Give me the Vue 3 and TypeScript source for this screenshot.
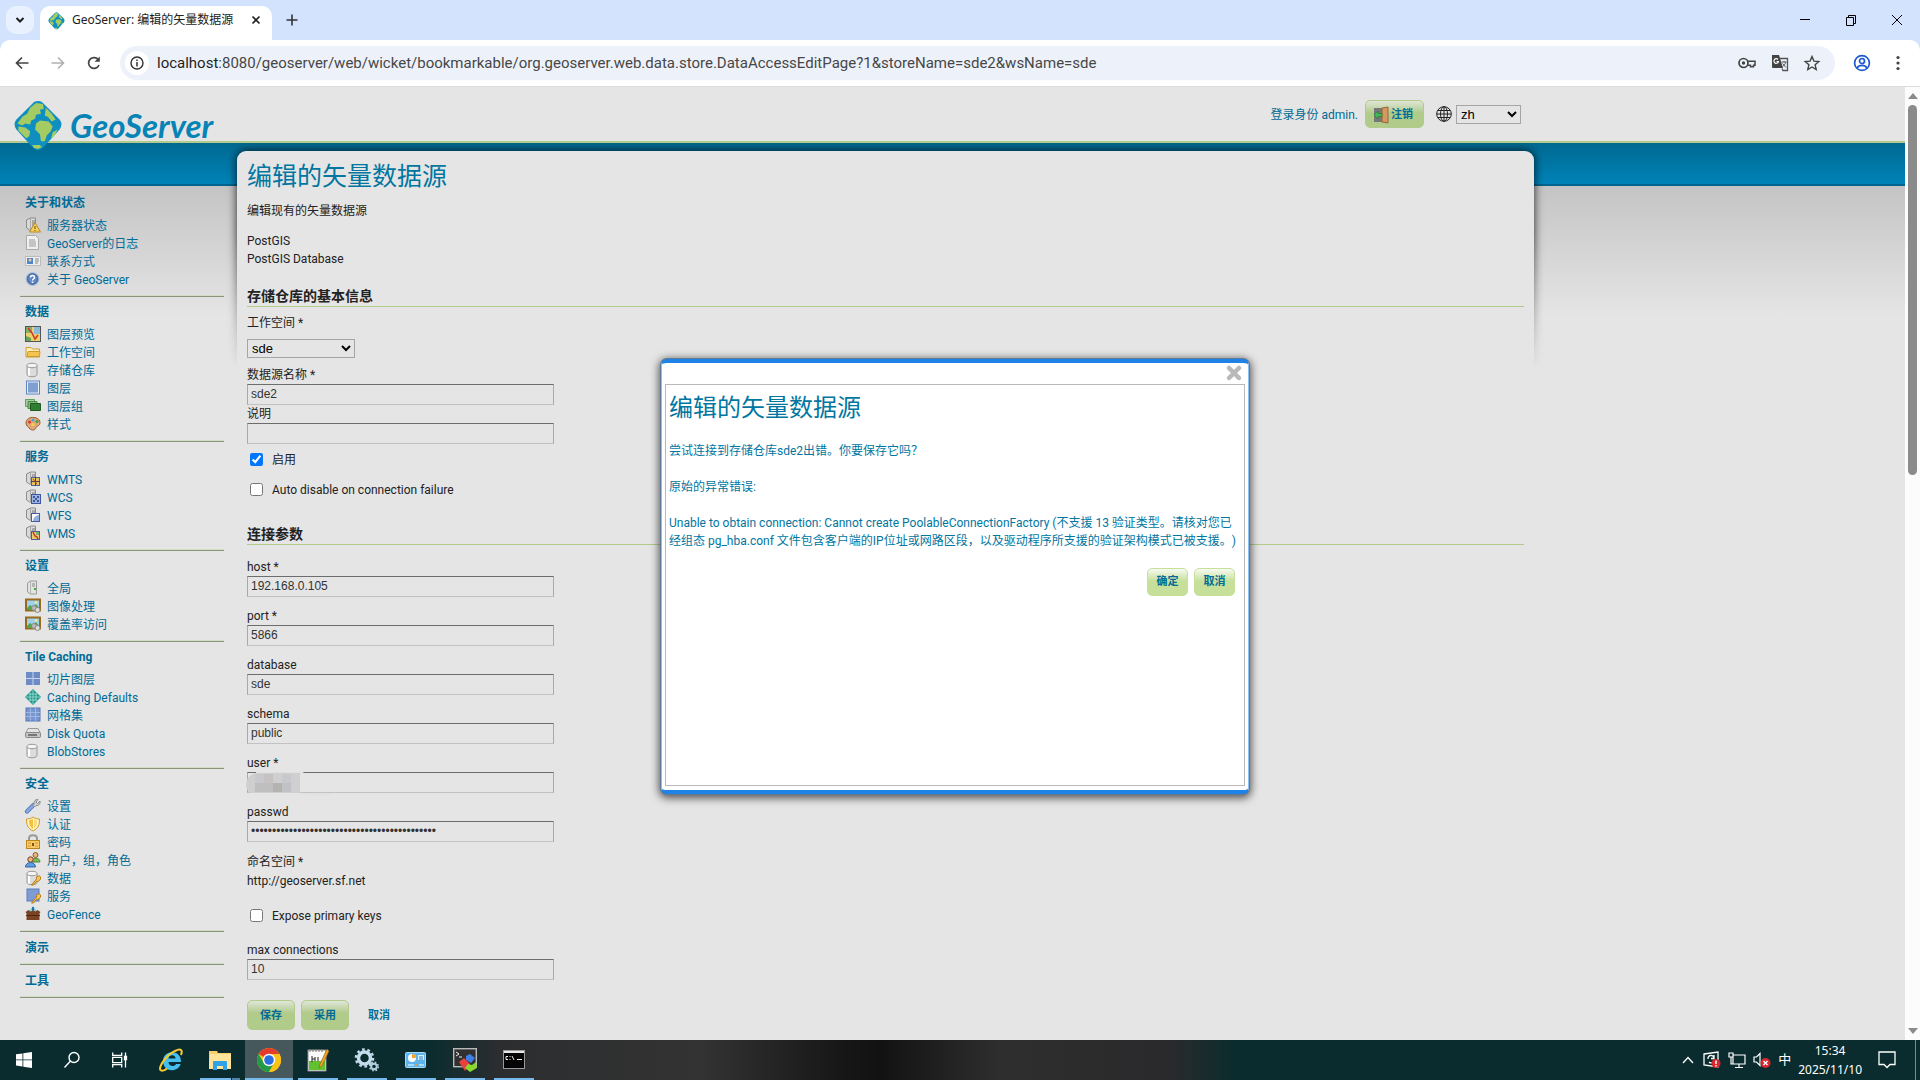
<script setup lang="ts">
import { ref } from 'vue'

interface Item { icon: string; label: string }
interface Section { title: string; items: Item[] }

const server = '<path d="M1.500 3l4-2h5v12h-6l-3-2z" fill="#d9d9d9" stroke="#8c8c8c"/><path d="M5.500 1v12" stroke="#aaa"/><path d="M7 4h3M7 6h3M7 8h3" stroke="#777"/>'
const cylinder = '<path d="M2 3.500v9c0 3 10 3 10 0v-9" fill="#dcdcdc" stroke="#999"/><path d="M4 5.500v8" stroke="#fff" stroke-width="2"/><ellipse cx="7" cy="3.500" rx="5" ry="2.200" fill="#f4f4f4" stroke="#999"/>'
const key = '<path d="M6.500 15l5-6c-.5-2 1-3.500 3-3 1.500.5 1.500 3 0 4.500-1 1-2 1-2.700.700L8.500 15z" fill="#f6c65b" stroke="#b57a14"/>'
const picture = '<rect x="1" y="1.500" width="14" height="11" fill="#9fd0ee" stroke="#9a6a1c" stroke-width="2"/><path d="M2 10l3-3 3 2 3-3 3 4v2H2z" fill="#4fa34c"/><circle cx="11" cy="4.500" r="1.300" fill="#f5ee80"/><circle cx="9" cy="10" r="2.500" fill="#bbb" stroke="#888"/><circle cx="12.500" cy="12" r="2.500" fill="#ddd" stroke="#888"/>'

const icons: Record<string, string> = {
  status: server + '<path d="M10 5.500L15.500 15h-11z" fill="#f8cf5f" stroke="#b98a22"/><path d="M10 9v3M10 13v1" stroke="#6b4a00"/>',
  log: '<path d="M1.500.500h9l3 3v11h-12z" fill="#f0f0f0" stroke="#aaa"/><path d="M4 5h6M4 7h7M4 9h7M4 11h7" stroke="#999"/>',
  contact: '<rect x=".5" y="3.500" width="15" height="9" fill="#eee" stroke="#bbb"/><rect x="2" y="5" width="6" height="6" fill="#4d86c9"/><circle cx="5" cy="7" r="1.500" fill="#f1c7a0"/><path d="M10 6h4M10 8h4M10 10h3" stroke="#888"/>',
  about: '<circle cx="7.500" cy="8" r="6.500" fill="#6288c4" stroke="#b6c3da"/><circle cx="7.500" cy="8" r="5" fill="none" stroke="#44689f"/><path d="M5.500 6.500c0-3 4-2.500 4 0 0 1.500-2 1.500-2 3M7.500 10.500v1.500" fill="none" stroke="#fff" stroke-width="1.500"/>',
  preview: '<rect x=".5" y=".5" width="15" height="15" fill="#e9d36a" stroke="#555"/><path d="M1 1h6v6H1z" fill="#7fb36c"/><path d="M9 1h6v7H9z" fill="#8db8de"/><path d="M1 10l5 2v3H1z" fill="#69a05a"/><path d="M3 2l4 5 3 6 3-4" fill="none" stroke="#d8342a" stroke-width="1.500"/>',
  folder: '<path d="M1 3.500h5l1.500 1.500h7v8H1z" fill="#fff0b8" stroke="#d19a2e"/><path d="M2 12.500l1-5h12l-.5 5z" fill="#f4c553" stroke="#d19a2e"/>',
  store: cylinder,
  layer: '<rect x="1.500" y="1" width="13" height="13" fill="#e8effa" stroke="#5f83c3"/><rect x="3" y="2.500" width="10" height="10" fill="#7e9fcf"/>',
  group: '<path d="M.5 1.500h9v7h-9z" fill="#a8cfa4" stroke="#5f9f5c"/><path d="M3 3.500h9v7H3z" fill="#7db878" stroke="#4a8c47"/><path d="M5.500 5.500h10v7h-10z" fill="#2f7d33" stroke="#1f5d24"/>',
  style: '<path d="M1 7C1 3 5 1 9 1.500c5 .5 7 4 5.500 7-1 2-3 1-3.500 3-.5 3-4 3-6 1.500C3.500 11 1 10 1 7z" fill="#e0a777" stroke="#9a5a2c"/><circle cx="4.500" cy="6" r="1.500" fill="#d33"/><circle cx="8" cy="4" r="1.500" fill="#4aa2d8"/><circle cx="12" cy="5.500" r="1.500" fill="#3fa34a"/><circle cx="8" cy="8.500" r="1.500" fill="#f1d04c"/>',
  wmts: server + '<rect x="6.500" y="6.500" width="8" height="8" fill="#e5c35a" stroke="#555c9a"/><path d="M10.500 6v9M6 10.500h9" stroke="#444"/><path d="M8 8l4 5" stroke="#c33"/>',
  wcs: server + '<rect x="6.500" y="5.500" width="9" height="9" fill="#9fb4dd" stroke="#3f56a0"/><path d="M8 7h2v2H8zM12 7h2v2h-2zM10 9h2v2h-2zM8 11h2v2H8zM12 11h2v2h-2z" fill="#3f56a0"/>',
  wfs: server + '<rect x="6.500" y="6.500" width="8" height="8" fill="#fff" stroke="#4a5aa0"/><path d="M14 8c-3 0-6 3-6 6h6z" fill="#8fb0dd"/>',
  wms: server + '<rect x="6.500" y="6.500" width="8" height="8" fill="#e8cf6a" stroke="#555c9a"/><path d="M11 7h3v3h-3z" fill="#7ab26c"/><path d="M8 7l2 4 2 1 1 2" fill="none" stroke="#c33" stroke-width="1.500"/>',
  global: '<path d="M2.500 3l3-2h6v13h-6l-3-2z" fill="#e3e3e3" stroke="#9a9a9a"/><path d="M5.500 1v13" stroke="#b5b5b5"/><path d="M7 4h3M7 6h3" stroke="#888"/><path d="M9 9h2" stroke="#36b02f" stroke-width="2"/>',
  image: picture,
  tiles: '<rect x="1" y="1" width="14" height="13" fill="#6d8cc6"/><path d="M1 7.500h14M8 1v13" stroke="#c8d5ec"/>',
  globe: '<path d="M8 0l8 8-8 8-8-8z" fill="#1d9a94"/><path d="M8 1v14M1 8h14M5 4v8M11 4v8M4 5h8M4 11h8" stroke="#bfe6cf" stroke-width=".700"/>',
  gridset: '<rect x="1" y="1" width="14" height="13" fill="#7896cf" stroke="#5777b8"/><path d="M5.500 1v13M10.500 1v13M1 5.500h14M1 9.500h14" stroke="#a9bee4" stroke-width=".800"/>',
  disk: '<path d="M3 3.500h10l2.500 5H.5z" fill="#e3e3e3" stroke="#999"/><rect x=".5" y="7.500" width="15" height="5" rx="1" fill="#c4c4c4" stroke="#888"/><path d="M3 10h9" stroke="#777" stroke-width="2"/>',
  wrench: '<path d="M2 13.500l6-6" stroke="#5c7cba" stroke-width="4.500" stroke-linecap="round"/><path d="M2 13.500l6-6" stroke="#86a6dd" stroke-width="2.600" stroke-linecap="round"/><path d="M8 7.500l1-1.500c-.5-3 2-5 4-4.500l-2 2.500 1.500 1.500L15 3c.5 3-1.500 5-4 4.500L9.500 9z" fill="#cfcfcf" stroke="#888"/>',
  shield: '<path d="M1.500 3C4 3 6 2.500 8 1c2 1.500 4 2 6.500 2 0 6-1 9-6.500 12C2.500 12 1.500 9 1.500 3z" fill="#fff3c2" stroke="#d29a22"/><path d="M4 4.500l4-1.500v10C5 11 4 8.500 4 4.500z" fill="#f2c23c"/><path d="M9 3.500l3 1c0 4-1 6-3 8z" fill="#f7d97a"/>',
  lock: '<path d="M4 7V4.500C4 0 12 0 12 4.500V7" fill="none" stroke="#999" stroke-width="2"/><rect x="1.500" y="6.500" width="13" height="8" fill="#f8ca68" stroke="#bd861c"/><path d="M3 9h3M10 9h3M3 12h3M10 12h3" stroke="#d3952a"/><path d="M8 9v3" stroke="#7d5510" stroke-width="2"/>',
  users: '<circle cx="10.500" cy="3" r="2.500" fill="#eab580" stroke="#8f5a2c"/><path d="M7 10c0-5 8-5 8 0z" fill="#7fb95c" stroke="#4b8a32"/><circle cx="5.500" cy="7.500" r="2.700" fill="#eab580" stroke="#7c3b22"/><path d="M.5 15c0-6 10-6 10 0z" fill="#5f9be0" stroke="#3267ab"/>',
  dataKey: cylinder + key,
  serviceKey: '<rect x="2" y="1" width="12" height="12" fill="#7e9bd2" stroke="#5b7cc0"/>' + key,
  fence: '<path d="M3 6l5-6 5 6z" fill="#8fcfd5"/><path d="M8 1v4" stroke="#2a6fb0" stroke-width="2"/><path d="M.5 6l3-2 2 1.500L8 4.500l2.500 1 2-1.500 3 2-1 1.500V14h-13V7.500z" fill="#7a4424"/><path d="M1 9.500h14" stroke="#4d2713"/>'
}

const sections: Section[] = [
  { title: '关于和状态', items: [{ icon: 'status', label: '服务器状态' }, { icon: 'log', label: 'GeoServer的日志' }, { icon: 'contact', label: '联系方式' }, { icon: 'about', label: '关于 GeoServer' }] },
  { title: '数据', items: [{ icon: 'preview', label: '图层预览' }, { icon: 'folder', label: '工作空间' }, { icon: 'store', label: '存储仓库' }, { icon: 'layer', label: '图层' }, { icon: 'group', label: '图层组' }, { icon: 'style', label: '样式' }] },
  { title: '服务', items: [{ icon: 'wmts', label: 'WMTS' }, { icon: 'wcs', label: 'WCS' }, { icon: 'wfs', label: 'WFS' }, { icon: 'wms', label: 'WMS' }] },
  { title: '设置', items: [{ icon: 'global', label: '全局' }, { icon: 'image', label: '图像处理' }, { icon: 'image', label: '覆盖率访问' }] },
  { title: 'Tile Caching', items: [{ icon: 'tiles', label: '切片图层' }, { icon: 'globe', label: 'Caching Defaults' }, { icon: 'gridset', label: '网格集' }, { icon: 'disk', label: 'Disk Quota' }, { icon: 'store', label: 'BlobStores' }] },
  { title: '安全', items: [{ icon: 'wrench', label: '设置' }, { icon: 'shield', label: '认证' }, { icon: 'lock', label: '密码' }, { icon: 'users', label: '用户，组，角色' }, { icon: 'dataKey', label: '数据' }, { icon: 'serviceKey', label: '服务' }, { icon: 'fence', label: 'GeoFence' }] },
  { title: '演示', items: [] },
  { title: '工具', items: [] }
]

const form = ref({ name: 'sde2', description: '', enabled: true, autoDisable: false, expose: false, max: '10' })

const params = ref([
  { id: 'host', label: 'host *', value: '192.168.0.105', type: 'text' },
  { id: 'port', label: 'port *', value: '5866', type: 'text' },
  { id: 'database', label: 'database', value: 'sde', type: 'text' },
  { id: 'schema', label: 'schema', value: 'public', type: 'text' },
  { id: 'user', label: 'user *', value: '', type: 'text' },
  { id: 'passwd', label: 'passwd', value: 'x'.repeat(44), type: 'password' }
])

const globePath = '<path d="M21 2Q25 0 29 2L47 20Q51 25 47 30L30 49Q25 53 20 49L3 30Q-1 25 3 20Z" fill="#0e8fc0"/><path d="M17 8l6-5 7 1 1 5-4 1 1 4-5 1-1 4-4 2-1 4-5-1-3 2-5-2 5-7 5-3zM33 8l6 6 4 6-4 2-4-5-3-1zM27 21l9 1 4 5-2 5-4 4-2 6-4 0-1-7-5-5 1-6zM5 27l7 1 5 4-1 5-3 2-8-8zM19 46l8 0 2 2-4 2-4-1zM40 33l5-3-3 6-4 4z" fill="#a5cc62"/>'

interface App { name: string; svg: string; state: string }
const tasks: App[] = [
  { name: 'Internet Explorer', state: '', svg: '<path d="M22 14H9.500c0 4.500 6 5.500 7.500 2h4.600C19 25 4 24.500 4 13 4 1.500 22.500.5 22 14zM9.500 10.500h7.200c-.7-4.200-6.500-4.200-7.200 0z" fill="#45bff0" fill-rule="evenodd"/><path d="M22 7c2-5 0-7-6-4C9 6 1 16 1 21c.5 3 5 1.500 7-.5" fill="none" stroke="#f6cb2f" stroke-width="2"/>' },
  { name: 'Explorer', state: 'open stacked', svg: '<path d="M1 3h8l1 2h13v16H1z" fill="#f6cf6c"/><path d="M2 6h21v15H1z" fill="#ffe49c"/><path d="M5 22v-8q0-1 1-1h12q1 0 1 1v8h-4v-4H9v4z" fill="#2fa3e6"/>' },
  { name: 'Chrome', state: 'open active', svg: '<circle cx="12" cy="12" r="12" fill="#fbc116"/><path d="M12 12L1.600 6A12 12 0 0 1 22.400 6z" fill="#e33b2e"/><path d="M1.600 6A12 12 0 0 0 12 24l5.200-9L12 12 6.800 15z" fill="#229a4a"/><path d="M12 6h10.400A12 12 0 0 1 12 24l5.200-9z" fill="#fbc116"/><circle cx="12" cy="12" r="6.200" fill="#fff"/><circle cx="12" cy="12" r="4.800" fill="#2a6fe0"/>' },
  { name: 'Notepad++', state: 'open', svg: '<rect x="2" y="2" width="18" height="21" fill="#fafafa" stroke="#888"/><path d="M3 13h16v9H3z" fill="#5fc22e"/><path d="M4 1v3M7 1v3M10 1v3M13 1v3M16 1v3" stroke="#777"/><path d="M6 8v6M6 11h3M9 9v4M12 9v4" stroke="#222" fill="none"/><path d="M21 1l2 2-7 15-3 2 1-4z" fill="#f0a32c" stroke="#8a5a12" stroke-width=".600"/>' },
  { name: 'Services', state: 'open', svg: '<circle cx="9.500" cy="10" r="6" fill="none" stroke="#c4dcec" stroke-width="3.500"/><circle cx="9.500" cy="10" r="8.600" fill="none" stroke="#c4dcec" stroke-width="2.400" stroke-dasharray="2.700 2.700"/><circle cx="19" cy="18.500" r="2.800" fill="none" stroke="#b4cede" stroke-width="2"/><circle cx="19" cy="18.500" r="4.300" fill="none" stroke="#b4cede" stroke-width="1.600" stroke-dasharray="1.700 1.700"/>' },
  { name: 'Control Panel', state: 'open', svg: '<rect x="1.500" y="4.500" width="20" height="15" rx="1" fill="#5db4ea" stroke="#a8dcf8"/><circle cx="8" cy="10" r="4" fill="#fff"/><path d="M8 10V6a4 4 0 0 1 4 4z" fill="#f2a42e"/><path d="M14 7h6v5h-6z" fill="#d7f0fc"/><path d="M15 9h4M15 11h4" stroke="#2f7fc1"/><path d="M4 17h6M15 17h5" stroke="#fff"/><circle cx="12" cy="17" r="1" fill="#f2a42e"/>' },
  { name: 'MobaXterm', state: 'open', svg: '<rect x=".7" y=".7" width="22.600" height="18" fill="#303030" stroke="#b9b9b9" stroke-width="1.400"/><path d="M3 4l3 2-3 2M6 9h3" stroke="#eee" fill="none"/><path d="M13 8l4-2 5 4-4 5-5-3z" fill="#3f7fe6"/><path d="M6 14l5-4 6 6-5 7z" fill="#e8423c"/><path d="M12 20l3-4 4 1 4-3 1 6-7 4z" fill="#8bd82c"/>' },
  { name: 'Command Prompt', state: 'open', svg: '<rect x="1.500" y="2.500" width="21" height="18" fill="#050505" stroke="#999"/><path d="M2 4h20" stroke="#e8e8e8" stroke-width="2"/><path d="M6 8.500H4v3h2M8 8v1M8 11v1M10 8l2 4M15 11.500h5" stroke="#eee" fill="none"/>' }
]
</script>

<template>
  <div class="desktop">
    <header class="tabs">
      <button class="tab-search" aria-label="tabs"><svg width="10" height="10" viewBox="0 0 10 10"><path d="M1.500 3L5 6.500 8.500 3" fill="none" stroke="#1f1f1f" stroke-width="2" /></svg></button>
      <div class="tab">
        <svg width="17" height="17" viewBox="0 0 50 50" v-html="globePath"></svg>
        <span class="tab-title">GeoServer: 编辑的矢量数据源</span>
        <button class="plain" aria-label="close tab"><svg width="10" height="10" viewBox="0 0 10 10"><path d="M1.500 1.500l7 7M8.500 1.500l-7 7" stroke="#1f1f1f" stroke-width="1.600" /></svg></button>
      </div>
      <button class="plain new-tab" aria-label="new tab"><svg width="12" height="12" viewBox="0 0 12 12"><path d="M6 .5v11M.5 6h11" stroke="#333" stroke-width="1.600" /></svg></button>
      <div class="window-buttons">
        <button class="plain" aria-label="minimize"><svg width="12" height="12" viewBox="0 0 12 12"><path d="M1 5.500h10" stroke="#000" /></svg></button>
        <button class="plain" aria-label="restore"><svg width="12" height="12" viewBox="0 0 12 12"><path d="M1.500 3.500h7v8h-7zM3.500 3V1.500h7v8H9" fill="none" stroke="#000" /></svg></button>
        <button class="plain" aria-label="close"><svg width="12" height="12" viewBox="0 0 12 12"><path d="M1 1l10 10M11 1L1 11" stroke="#000" /></svg></button>
      </div>
    </header>

    <div class="toolbar-wrap">
      <nav class="toolbar">
        <button class="plain nav-btn" aria-label="back"><svg width="14" height="14" viewBox="0 0 14 14"><path d="M13.500 7H1.500M7 1.500L1.500 7 7 12.500" fill="none" stroke="#444" stroke-width="1.700" /></svg></button>
        <button class="plain nav-btn" aria-label="forward"><svg width="14" height="14" viewBox="0 0 14 14"><path d="M.5 7h12M7 1.500L12.500 7 7 12.500" fill="none" stroke="#b0b0b0" stroke-width="1.600" /></svg></button>
        <button class="plain nav-btn" aria-label="reload"><svg width="14" height="14" viewBox="0 0 14 14"><path d="M12 9A5.400 5.400 0 1 1 11.500 4" fill="none" stroke="#444" stroke-width="1.700" /><path d="M12.800.5v5.300H7.500z" fill="#444" /></svg></button>
        <div class="omnibox">
          <span class="site-info"><svg width="14" height="14" viewBox="0 0 14 14"><circle cx="7" cy="7" r="6" fill="none" stroke="#333" stroke-width="1.400" /><path d="M7 6v4.500M7 3.500v1.500" stroke="#333" stroke-width="1.500" /></svg></span>
          <span class="url"><b>localhost</b>:8080/geoserver/web/wicket/bookmarkable/org.geoserver.web.data.store.DataAccessEditPage?1&amp;storeName=sde2&amp;wsName=sde</span>
          <svg width="18" height="12" viewBox="0 0 18 12"><circle cx="5.500" cy="6" r="4.500" fill="none" stroke="#444" stroke-width="1.700" /><circle cx="5.500" cy="6" r="1.700" fill="#444" /><path d="M9.500 4.300H17v4h-1.500v1.500h-3V8.300h-3" fill="none" stroke="#444" stroke-width="1.500" /></svg>
          <svg width="18" height="18" viewBox="0 0 18 18"><path d="M1 1h7l4 13H2q-1 0-1-1z" fill="#444" /><path d="M9 4.500h7.500v12H12l-1-2" fill="none" stroke="#555" stroke-width="1.300" /><path d="M7 5.500a2.300 2.300 0 1 0 .5 2H5.500" fill="none" stroke="#fff" stroke-width="1.200" /><path d="M10.500 8h5M13 7v1M14.800 8c-.5 2.500-2 3.500-3.300 4.500M11.500 9.500l3.500 4" fill="none" stroke="#555" /></svg>
          <svg width="16" height="16" viewBox="0 0 16 16"><path d="M8 1.500l1.900 4.600 4.900.4-3.700 3.200 1.100 4.800L8 12l-4.200 2.500 1.100-4.800L1.200 6.500l4.900-.4z" fill="none" stroke="#444" stroke-width="1.400" /></svg>
        </div>
        <svg class="profile" width="18" height="18" viewBox="0 0 18 18" fill="none" stroke="#1e59d0" stroke-width="1.700"><circle cx="9" cy="9" r="7.400" /><circle cx="9" cy="7" r="2.500" /><path d="M4 14c2-3.500 8-3.500 10 0" /></svg>
        <svg width="4" height="16" viewBox="0 0 4 16" fill="#444"><circle cx="2" cy="2.500" r="1.600" /><circle cx="2" cy="8" r="1.600" /><circle cx="2" cy="13.500" r="1.600" /></svg>
      </nav>
    </div>

    <div class="viewport">
      <div class="page">
        <div class="banner">
          <div class="banner-inner">
            <a class="logo" href="#">
              <svg width="50" height="50" viewBox="0 0 50 51" v-html="globePath"></svg>
              <span>GeoServer</span>
            </a>
            <div class="session">
              <span class="who">登录身份 admin.</span>
              <button class="green logout"><svg width="16" height="16" viewBox="0 0 16 16"><path d="M1 1h8v14H1z" fill="#777" /><path d="M9 1l6-1v16l-6-1z" fill="#d29a62" stroke="#9a6430" /><path d="M1 8l4-4v2.500h4v3H5V12z" fill="#43b854" stroke="#1f7f30" stroke-width=".700" /></svg>注销</button>
              <svg class="world" width="16" height="16" viewBox="0 0 16 16" fill="none" stroke="#222"><circle cx="8" cy="8" r="7.300" /><ellipse cx="8" cy="8" rx="3.500" ry="7.300" /><path d="M8 .5v15M.5 8h15M2 4.500h12M2 11.500h12" /></svg>
              <select class="lang" aria-label="language"><option>zh</option></select>
            </div>
          </div>
        </div>

        <div class="body">
          <aside class="sidebar">
            <section v-for="s in sections" :key="s.title" :class="{ empty: !s.items.length }">
              <h3>{{ s.title }}</h3>
              <ul v-if="s.items.length">
                <li v-for="i in s.items" :key="i.label">
                  <a href="#"><svg width="16" height="16" viewBox="0 0 16 16" v-html="icons[i.icon]"></svg>{{ i.label }}</a>
                </li>
              </ul>
            </section>
          </aside>

          <main class="panel">
            <div class="shade"><div></div></div>
            <div class="content">
              <h1>编辑的矢量数据源</h1>
              <p class="intro">编辑现有的矢量数据源</p>
              <p class="kind">PostGIS<br />PostGIS Database</p>

              <h2>存储仓库的基本信息</h2>
              <label class="ws" for="ws">工作空间 *</label>
              <select id="ws" class="workspace"><option>sde</option></select>
              <label for="name">数据源名称 *</label>
              <input id="name" v-model="form.name" type="text" />
              <label for="desc">说明</label>
              <input id="desc" v-model="form.description" type="text" />
              <label class="check"><input v-model="form.enabled" type="checkbox" />启用</label>
              <label class="check second"><input v-model="form.autoDisable" type="checkbox" />Auto disable on connection failure</label>

              <h2 class="params-title">连接参数</h2>
              <div v-for="p in params" :key="p.id" class="field">
                <label :for="p.id">{{ p.label }}</label>
                <input :id="p.id" v-model="p.value" :type="p.type" />
                <svg v-if="p.id === 'user'" class="mosaic" width="90" height="24" viewBox="0 0 90 24">
                  <path d="M10 0h48l-4 3v18h34q-8 4-24 2L50 21H10z" fill="#e1e1e1" />
                  <path d="M10 1h44v20H4Q0 18 0 12 1 3 10 1z" fill="#cfcfcf" />
                  <path d="M9 2h9v9H9zM36 2h9v9h-9z" fill="#c8c9cc" /><path d="M18 2h9v9h-9z" fill="#c6c2c3" />
                  <path d="M9 11h9v9H9zM18 11h9v9h-9z" fill="#bfbfc0" /><path d="M27 11h9v9h-9z" fill="#b4b3b0" /><path d="M36 11h9v9h-9z" fill="#c0c2c5" />
                </svg>
              </div>
              <p class="ns">命名空间 *</p>
              <p>http://geoserver.sf.net</p>
              <label class="check expose"><input v-model="form.expose" type="checkbox" />Expose primary keys</label>
              <label class="max" for="max">max connections</label>
              <input id="max" v-model="form.max" type="text" />
              <div class="actions">
                <button class="green">保存</button>
                <button class="green">采用</button>
                <a href="#">取消</a>
              </div>
            </div>
          </main>
        </div>
      </div>

      <div class="scrollbar"><i class="up"></i><i class="thumb"></i><i class="down"></i></div>

      <div class="overlay">
        <div class="dialog" role="dialog" aria-labelledby="dialog-title">
          <div class="dialog-bar">
            <button class="plain" aria-label="close dialog"><svg width="16" height="16" viewBox="0 0 16 16"><path d="M3 3l10 10M13 3L3 13" stroke="#b9b9b9" stroke-width="4.500" stroke-linecap="round" /></svg></button>
          </div>
          <div class="dialog-body">
            <h1 id="dialog-title">编辑的矢量数据源</h1>
            <p>尝试连接到存储仓库sde2出错。你要保存它吗？</p>
            <p>原始的异常错误:</p>
            <p>Unable to obtain connection: Cannot create PoolableConnectionFactory (不支援 13 验证类型。请核对您已<br />经组态 pg_hba.conf 文件包含客户端的IP位址或网路区段，以及驱动程序所支援的验证架构模式已被支援。)</p>
            <div class="dialog-actions">
              <button class="green">确定</button>
              <button class="green">取消</button>
            </div>
          </div>
        </div>
      </div>
    </div>

    <footer class="taskbar">
      <button class="task" aria-label="start"><svg width="16" height="16" viewBox="0 0 16 16" fill="#fff"><path d="M0 2.300l6.500-.9v6.100H0zM7.300 1.300L16 0v7.500H7.300zM0 8.300h6.500v6.200L0 13.600zM7.300 8.300H16V16l-8.700-1.300z" /></svg></button>
      <button class="task" aria-label="search"><svg width="18" height="18" viewBox="0 0 18 18" fill="none" stroke="#fff" stroke-width="1.400"><circle cx="11" cy="6.500" r="5" /><path d="M7.500 10L1.500 16.500" /></svg></button>
      <button class="task view" aria-label="task view"><svg width="16" height="16" viewBox="0 0 16 16" fill="none" stroke="#fff" stroke-width="1.300"><path d="M.7.500v2.800h9V.5M.7 5.300h9v5.400h-9zM.7 15.500v-2.800h9v2.800M13.500.5v15" /><path d="M12.500 4.500h2v3h-2z" fill="#fff" /></svg></button>
      <button v-for="t in tasks" :key="t.name" class="task app" :class="t.state" :aria-label="t.name"><svg width="24" height="24" viewBox="0 0 24 24" v-html="t.svg"></svg></button>
      <div class="tray">
        <svg width="12" height="8" viewBox="0 0 12 8"><path d="M1 7l5-5.500L11 7" fill="none" stroke="#fff" stroke-width="1.300" /></svg>
        <svg width="18" height="18" viewBox="0 0 18 18" fill="none" stroke="#fff" stroke-width="1.300"><path d="M1 3l14-2v15L1 14z" /><path d="M5 8a3 3 0 0 1 6-1M11 4v3.500H8M11 10a3 3 0 0 1-5 1" /><circle cx="13" cy="12.500" r="4.500" fill="#d9252e" stroke="none" /><path d="M13 9.500v3.500M13 14v1.500" stroke-width="1.500" /></svg>
        <svg width="18" height="18" viewBox="0 0 18 18" fill="none" stroke="#fff" stroke-width="1.200"><path d="M5 4h12v9H5zM11 13v3M7 16.500h8M1 2h4v4H1zM3 6v7h2" /></svg>
        <svg width="18" height="18" viewBox="0 0 18 18" fill="none" stroke="#fff" stroke-width="1.200"><path d="M1 6h2.500L7 2.500v12L3.500 11H1z" /><circle cx="12.500" cy="12" r="5" fill="#d9252e" stroke="none" /><path d="M10.500 10l4 4M14.500 10l-4 4" stroke-width="1.400" /></svg>
        <span class="ime">中</span>
        <time>15:34<br />2025/11/10</time>
        <svg class="note" width="18" height="18" viewBox="0 0 18 18"><path d="M1 1h16v12.500h-5L9 16.500l-3-3H1z" fill="none" stroke="#fff" stroke-width="1.300" /></svg>
        <i class="peek"></i>
      </div>
    </footer>
  </div>
</template>

<style>
body { margin: 0; }
</style>

<style scoped>
.desktop { display: flex; flex-direction: column; min-height: 100vh; font: 12px/18px Roboto, "Noto Sans CJK SC", sans-serif; color: #222; text-spacing-trim: space-all; }
.desktop * { box-sizing: border-box; }
svg { display: block; flex: none; overflow: visible; }
h1, h2, h3, p, ul { margin: 0; padding: 0; font-weight: normal; }
ul { list-style: none; }
a { text-decoration: none; color: #006b96; }
button { font: inherit; border: 0; padding: 0; cursor: pointer; }
.plain { background: none; display: flex; align-items: center; justify-content: center; }

.tabs { display: flex; align-items: center; height: 40px; background: #d3e3fd; padding-left: 6px; flex: none; }
.tab-search { width: 28px; height: 28px; border-radius: 10px; background: #e9f1fe; display: flex; align-items: center; justify-content: center; margin-right: 6px; }
.tab { display: flex; align-items: center; align-self: flex-end; width: 232px; height: 34px; padding: 0 11px 6px 8px; border-radius: 10px 10px 0 0; background: #fff; }
.tab-title { flex: 1; padding-left: 7px; font-family: "Noto Sans", "Noto Sans CJK SC", sans-serif; white-space: nowrap; }
.new-tab { margin-left: 14px; }
.window-buttons { display: flex; margin-left: auto; }
.window-buttons button { width: 46px; height: 40px; }

.toolbar-wrap { background: #d3e3fd; flex: none; }
.toolbar { display: flex; align-items: center; height: 47px; padding: 0 20px 0 4px; background: #fff; border-radius: 10px 10px 0 0; border-bottom: 1px solid #dcdcdc; }
.nav-btn { width: 36px; height: 32px; }
.omnibox { display: flex; align-items: center; flex: 1; height: 34px; margin-left: 8px; padding: 0 15px 0 5px; gap: 15px; border-radius: 17px; background: #edf2fa; }
.site-info { display: flex; align-items: center; justify-content: center; width: 24px; height: 24px; border-radius: 12px; background: #fff; margin-right: -7px; }
.url { flex: 1; font: 15px/24px Roboto, sans-serif; color: #474747; white-space: nowrap; }
.url b { font-weight: normal; color: #1f1f1f; }
.profile { margin: 0 25px 0 18px; }

.viewport { position: relative; display: flex; flex: 1; background: #e5e5e5; }
.page { flex: 1; display: flex; flex-direction: column; min-width: 0; }
.banner { height: 56px; border-bottom: 2px solid #b1cb8b; }
.banner-inner { display: flex; justify-content: space-between; max-width: 1534px; padding: 0 13px; }
.logo { position: relative; z-index: 1; display: flex; gap: 7px; height: 66px; padding-top: 13px; font: italic bold 33px/50px Lato, sans-serif; color: #0783b6; }
.session { display: flex; align-items: center; height: 54px; }
.who { color: #006b96; margin-right: 7px; padding-top: 2px; }
.green { height: 30px; border: 1px solid #b1cb8b; border-radius: 5px; background: linear-gradient(#e0e6d8, #b1cb8b 12px); color: #006b96; font-size: 11px; font-weight: bold; }
.logout { display: flex; align-items: center; gap: 2px; width: 59px; height: 28px; padding: 2px 0 0 7px; }
.world { margin: 0 4px 0 12px; }
select { font: 13px "Liberation Sans", sans-serif; color: #000; background: #e5e5e5; border: 1px solid #a5a5a5; height: 19px; display: block; }
.lang { width: 65px; }

.body { display: flex; flex: 1; background: linear-gradient(#006991, #0083b8) 0 0 / 100% 41px no-repeat, linear-gradient(#00658f, #00658f) 0 41px / 100% 2px no-repeat, linear-gradient(#c4c4c4, #e5e5e5) 0 43px / 100% 130px no-repeat; }
.sidebar { flex: none; width: 204px; margin: 45px 13px 0 20px; }
.sidebar section { padding: 6px 5px 7px; border-bottom: 1px solid #8b957c; box-shadow: inset 0 -1px #d3dcc6; }
.sidebar .empty { padding: 7px 5px; }
.sidebar h3 { font-weight: bold; font-size: 12px; color: #006b96; }
.sidebar ul { margin-top: 5px; }
.sidebar a { display: flex; align-items: center; gap: 6px; height: 18px; }
.sidebar a svg { margin-bottom: 2px; }

.panel { position: relative; flex: 1; max-width: 1297px; margin: 8px 12px 0 0; }
.shade { position: absolute; inset: -8px -12px auto; height: 226px; overflow: hidden; mask: linear-gradient(#000 40%, transparent); }
.shade div { margin: 8px 12px 0; height: 240px; border-radius: 9px; box-shadow: 0 0 8px 1px rgba(0, 0, 0, .7); }
.content { position: relative; min-height: 100%; padding: 11px 10px 9px; border-radius: 9px 9px 0 0; background: #e5e5e5; }
h1 { font-size: 25px; line-height: 30px; color: #0076a1; }
.intro { margin-top: 10px; }
.kind { margin-top: 12px; }
h2 { margin-top: 19px; padding-bottom: 1px; border-bottom: 1px solid #b1cb8b; font-size: 14px; line-height: 18px; font-weight: bold; }
.params-title { margin-top: 26px; }
.content label { display: block; width: max-content; }
.content .ws { margin: 7px 0; }
.workspace { width: 108px; margin-bottom: 8px; }
input[type="text"], input[type="password"] { display: block; width: 307px; height: 21px; padding: 0 3px 2px; border: 1px solid #a9a9a9; border-top-color: #6d6d6d; border-bottom-color: #c2c2c2; background: #e5e5e5; font: 12px "Liberation Sans", sans-serif; color: #333; }
.content .check { display: flex; align-items: center; gap: 9px; margin-top: 7px; }
.check input { width: 13px; height: 13px; margin: 0 0 2px 3px; }
.content .second { margin-top: 12px; }
.field { position: relative; padding-top: 10px; }
.params-title + .field { padding-top: 13px; }
.mosaic { position: absolute; left: -1px; bottom: -3px; }
.ns { margin: 11px 0 1px; }
.content .expose { margin-top: 17px; }
.content .max { margin-top: 16px; }
.actions { display: flex; align-items: center; gap: 6px; margin-top: 20px; }
.actions .green { width: 48px; padding-top: 1px; }
.actions a { margin-left: 13px; padding-top: 2px; font-size: 11px; font-weight: bold; }

.scrollbar { flex: none; display: flex; flex-direction: column; align-items: center; width: 15px; background: #fcfcfc; padding: 6px 0; }
.up { border: 5px solid transparent; border-top: 0; border-bottom: 6px solid #8b8b8b; }
.down { margin-top: auto; border: 5px solid transparent; border-bottom: 0; border-top: 6px solid #8b8b8b; }
.thumb { width: 9px; height: 370px; margin-top: 6px; border-radius: 5px; background: #8b8b8b; }

.overlay { position: absolute; inset: 0; display: flex; justify-content: center; align-items: flex-start; padding: 272px 10px 0 0; }
.dialog { width: 588px; padding: 0 3px 4px; border: 1px solid #8cc0f5; border-top: 4px solid #1e82e6; border-bottom: 4px solid #1e82e6; border-radius: 6px; background: #fff; box-shadow: 0 0 0 1px #5f7b97, 0 2px 8px 2px rgba(0, 0, 0, .65); }
.dialog-bar { display: flex; justify-content: flex-end; align-items: flex-start; height: 21px; padding: 2px 3px 0; }
.dialog-body { height: 402px; border: 1px solid #b9b9b9; padding: 7px 3px; color: #0076a1; }
.dialog-body h1 { font-size: 24px; line-height: 32px; margin-bottom: 3px; }
.dialog-body p { margin-top: 18px; white-space: nowrap; }
.dialog-actions { display: flex; justify-content: flex-end; gap: 6px; margin: 18px 6px 0; }
.dialog-actions .green { width: 41px; height: 28px; border-color: #c6e09a; background: linear-gradient(#f7faf2, #c6e09a 12px); }

.taskbar { display: flex; flex: none; height: 40px; background: linear-gradient(90deg, #0b2c2e 0 430px, #2c2d2f 500px, #333 700px, #171717 840px, #121212 880px, #2e2e2e 1000px, #2a2a2c 1170px, #0b2c2e 1235px); color: #fff; }
.task { display: flex; align-items: center; justify-content: center; width: 48px; background: none; }
.view { margin-right: 3px; }
.app { width: 48px; margin-right: 1px; }
.open { background: linear-gradient(#76b9ed, #76b9ed) center bottom / 40px 2px no-repeat; }
.stacked { background: linear-gradient(90deg, #76b9ed 31px, #0b2c2e 31px 32px, #4f83ad 32px) center bottom / 40px 2px no-repeat; }
.active { background: linear-gradient(#76b9ed, #76b9ed) center bottom / 48px 2px no-repeat, #46585b; }
.tray { display: flex; align-items: center; margin-left: auto; gap: 7px; }
.tray svg:first-child { margin-right: 2px; }
.ime { font-size: 13px; }
time { text-align: center; font-family: "Noto Sans", sans-serif; line-height: 19px; }
.note { margin-left: 9px; }
.peek { width: 1px; height: 40px; margin: 0 4px 0 12px; background: #7b8c8c; }
</style>
